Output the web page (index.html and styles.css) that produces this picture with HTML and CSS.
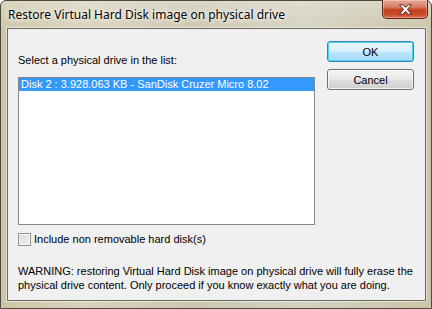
FILE: index.html
```html
<!DOCTYPE html>
<html>
<head>
<meta charset="utf-8">
<link rel="stylesheet" href="styles.css">
</head>
<body>
<div class="window">
  <div class="titlebar">
    <span class="title">Restore Virtual Hard Disk image on physical drive</span>
    <div class="close"><svg width="15" height="11" viewBox="0 0 15 11"><path d="M1.5 0.8 L5 0.8 L7.5 3.4 L10 0.8 L13.5 0.8 L9.4 5.4 L13.5 10.2 L10 10.2 L7.5 7.4 L5 10.2 L1.5 10.2 L5.6 5.4 Z" fill="#fff" stroke="#4a1a12" stroke-width="0.9" stroke-linejoin="round"/></svg></div>
  </div>
  <div class="client">
    <div class="main">
      <div class="left">
        <div class="label">Select a physical drive in the list:</div>
        <div class="listbox">
          <div class="item selected">Disk 2 : 3.928.063 KB - SanDisk Cruzer Micro 8.02</div>
        </div>
        <label class="check"><span class="box"></span>Include non removable hard disk(s)</label>
      </div>
      <div class="buttons">
        <div class="btn default">OK</div>
        <div class="btn">Cancel</div>
      </div>
    </div>
    <p class="warning">WARNING: restoring Virtual Hard Disk image on physical drive will fully erase the physical drive content. Only proceed if you know exactly what you are doing.</p>
  </div>
</div>
</body>
</html>
```

FILE: styles.css
```css
html, body {
  margin: 0;
  padding: 0;
}
body {
  width: 432px;
  height: 309px;
  overflow: hidden;
}
.window {
  width: 432px;
  height: 309px;
  box-sizing: border-box;
  border: 1px solid #4a4a40;
  border-radius: 6px 6px 0 0;
  background:
    linear-gradient(180deg, rgba(255,255,255,0.25) 0%, rgba(255,255,255,0) 30px),
    linear-gradient(90deg, #cfc6a9 0%, #d9d3bd 20%, #cdc7b2 45%, #d6d2c2 70%, #cbc4a8 100%);
  display: flex;
  flex-direction: column;
  padding: 0 5px 7px 6px;
}
.titlebar {
  height: 27px;
  display: flex;
  align-items: flex-start;
  justify-content: space-between;
}
.title {
  font-family: "Noto Sans", sans-serif;
  font-size: 12px;
  color: #000;
  margin-top: 5px;
  margin-left: 1px;
  text-shadow: 0 0 6px #fff, 0 0 3px #fff;
}
.close {
  width: 46px;
  height: 19px;
  margin-top: -1px;
  margin-right: -2px;
  box-sizing: border-box;
  border: 1px solid #5e241a;
  border-top: none;
  border-radius: 0 0 5px 5px;
  background: linear-gradient(180deg, #e9a898 0%, #d87a63 40%, #c2401f 55%, #cc4a28 80%, #dc7050 100%);
  display: flex;
  align-items: center;
  justify-content: center;
  box-shadow: inset 0 0 0 1px rgba(255,255,255,0.3);
}
.client {
  flex: 1;
  background: #f0f0f0;
  border: 1px solid #6a6a62;
  box-shadow: 0 0 0 1px rgba(255,255,255,0.5);
  font-family: "Liberation Sans", Arial, sans-serif;
  font-size: 11px;
  color: #000;
  padding: 0 10px;
}
.main {
  display: flex;
  justify-content: space-between;
}
.left {
  display: flex;
  flex-direction: column;
}
.label {
  margin-top: 25px;
  height: 13px;
  line-height: 13px;
}
.listbox {
  margin-top: 10px;
  width: 297px;
  height: 148px;
  background: #fff;
  border: 1px solid #828790;
  box-sizing: border-box;
}
.item {
  height: 13px;
  line-height: 13px;
  padding-left: 2px;
}
.item.selected {
  background: #3399ff;
  color: #fff;
}
.check {
  display: flex;
  align-items: center;
  margin-top: 8px;
  height: 13px;
  line-height: 13px;
}
.box {
  width: 11px;
  height: 11px;
  border: 1px solid #8e8f8f;
  background: linear-gradient(135deg, #d8d8d8 0%, #f4f4f4 100%);
  box-shadow: inset 0 0 0 1px #f6f6f6;
  margin-right: 3px;
}
.buttons {
  display: flex;
  flex-direction: column;
  gap: 7px;
  margin-top: 12px;
  margin-right: 1px;
}
.btn {
  width: 87px;
  height: 21px;
  box-sizing: border-box;
  border: 1px solid #707070;
  border-radius: 3px;
  background: linear-gradient(180deg, #f2f2f2 0%, #ebebeb 48%, #dddddd 52%, #cfcfcf 100%);
  box-shadow: inset 0 0 0 1px rgba(255,255,255,0.7);
  display: flex;
  align-items: center;
  justify-content: center;
}
.btn.default {
  border-color: #3c7fb1;
  background: linear-gradient(180deg, #eaf6fd 0%, #d9f0fc 48%, #bee6fd 52%, #a7d9f5 100%);
  box-shadow: inset 0 0 0 1px #48d7fa;
}
.warning {
  margin: 18px 0 0 0;
  line-height: 14px;
  width: 400px;
}
```
